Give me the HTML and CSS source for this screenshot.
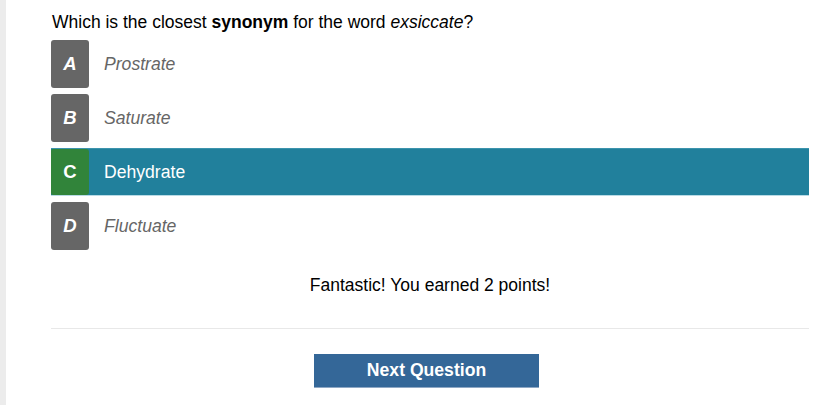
FILE: index.html
```html
<!DOCTYPE html>
<html>
<head>
<meta charset="utf-8">
<link rel="stylesheet" href="styles.css">
</head>
<body>
<div class="page">
  <div class="quiz">
    <p class="question">Which is the closest <b>synonym</b> for the word <i>exsiccate</i>?</p>
    <div class="options">
      <div class="option"><span class="letter">A</span><span class="label">Prostrate</span></div>
      <div class="option"><span class="letter">B</span><span class="label">Saturate</span></div>
      <div class="option correct"><span class="letter">C</span><span class="label">Dehydrate</span></div>
      <div class="option"><span class="letter">D</span><span class="label">Fluctuate</span></div>
    </div>
    <p class="result">Fantastic! You earned 2 points!</p>
    <hr class="divider">
    <div class="actions"><button class="next">Next Question</button></div>
  </div>
</div>
</body>
</html>
```
FILE: styles.css
```css
html, body {
  margin: 0;
  padding: 0;
  background: #fff;
}
body {
  font-family: "Liberation Sans", Arial, sans-serif;
  color: #000;
}
.page {
  min-height: 405px;
  border-left: 6px solid #ececec;
  box-sizing: border-box;
  padding: 0 6px 0 45px;
}
.quiz {
  width: 758px;
}
.question {
  margin: 0;
  padding-top: 11px;
  font-size: 17.5px;
  line-height: 22px;
  height: 29px;
  padding-left: 1px;
}
.options {
  display: flex;
  flex-direction: column;
  gap: 6px;
}
.option {
  display: flex;
  align-items: center;
  height: 48px;
}
.letter {
  width: 38px;
  height: 48px;
  border-radius: 3px;
  background: #666;
  color: #fff;
  font-weight: bold;
  font-style: italic;
  font-size: 18.5px;
  display: flex;
  align-items: center;
  justify-content: center;
}
.label {
  padding-left: 15px;
  font-size: 17.6px;
  font-style: italic;
  color: #666;
}
.option.correct {
  background: #21809c;
  border-top: 1px solid #3c94ad;
  border-bottom: 1px solid #b9dbe6;
  height: 46px;
}
.option.correct .letter {
  background: #31843a;
  font-style: normal;
  height: 46px;
  border-radius: 2px 3px 3px 2px;
}
.option.correct .label {
  color: #fff;
  font-style: normal;
}
.result {
  margin: 0;
  padding-top: 24px;
  text-align: center;
  font-size: 17.5px;
  line-height: 22px;
  height: 54px;
}
.divider {
  margin: 0;
  border: 0;
  border-top: 1px solid #e8e8e8;
}
.actions {
  display: flex;
  justify-content: center;
  padding-top: 25px;
  padding-right: 7px;
}
.next {
  width: 225px;
  height: 34px;
  border: 0;
  border-bottom: 1px solid #8ea7c4;
  background: #346798;
  color: #fff;
  font-family: "Liberation Sans", Arial, sans-serif;
  font-weight: bold;
  font-size: 17.6px;
  padding: 0;
}
```
